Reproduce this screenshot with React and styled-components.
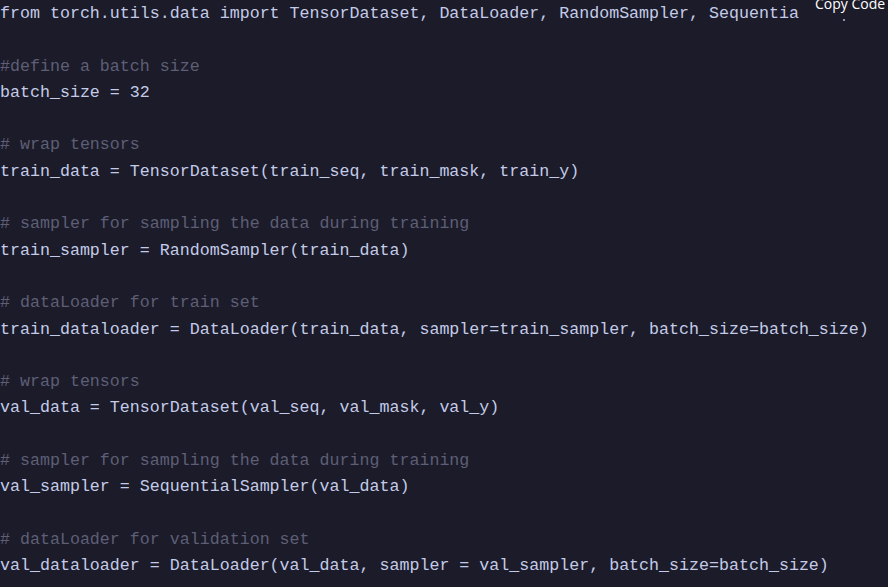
import { createGlobalStyle, styled } from 'styled-components';

const Global = createGlobalStyle`
  html, body {
    margin: 0;
    padding: 0;
    background: #1c1b29;
    overflow: hidden;
  }
`;

const Block = styled.div`
  position: relative;
  width: 888px;
  height: 587px;
  background: #1c1b29;
  overflow: hidden;
`;

const Code = styled.pre`
  margin: 0;
  padding: 1px 0 0;
  font-family: 'Liberation Mono', 'DejaVu Sans Mono', monospace;
  font-size: 16.65px;
  line-height: 26.3px;
  color: #c3cbe8;
  white-space: pre;
`;

const Comment = styled.span`
  color: #5c5f76;
`;

const CopyButton = styled.button`
  position: absolute;
  top: -6px;
  left: 815px;
  padding: 0;
  border: none;
  background: transparent;
  color: #ffffff;
  font-family: 'Open Sans', 'Liberation Sans', sans-serif;
  font-size: 14px;
  white-space: nowrap;
  cursor: pointer;
`;

const Dot = styled.span`
  position: absolute;
  top: 19px;
  left: 843px;
  width: 2px;
  height: 2px;
  background: #8a8fa8;
`;

const lines = [
  { text: 'from torch.utils.data import TensorDataset, DataLoader, RandomSampler, Sequentia' },
  { text: '' },
  { text: '#define a batch size', comment: true },
  { text: 'batch_size = 32' },
  { text: '' },
  { text: '# wrap tensors', comment: true },
  { text: 'train_data = TensorDataset(train_seq, train_mask, train_y)' },
  { text: '' },
  { text: '# sampler for sampling the data during training', comment: true },
  { text: 'train_sampler = RandomSampler(train_data)' },
  { text: '' },
  { text: '# dataLoader for train set', comment: true },
  { text: 'train_dataloader = DataLoader(train_data, sampler=train_sampler, batch_size=batch_size)' },
  { text: '' },
  { text: '# wrap tensors', comment: true },
  { text: 'val_data = TensorDataset(val_seq, val_mask, val_y)' },
  { text: '' },
  { text: '# sampler for sampling the data during training', comment: true },
  { text: 'val_sampler = SequentialSampler(val_data)' },
  { text: '' },
  { text: '# dataLoader for validation set', comment: true },
  { text: 'val_dataloader = DataLoader(val_data, sampler = val_sampler, batch_size=batch_size)' },
];

const App = () => {
  return (
    <>
      <Global />
      <Block>
        <Code>
          {lines.map((line, i) => (
            <div key={i}>
              {line.comment ? <Comment>{line.text}</Comment> : line.text || ' '}
            </div>
          ))}
        </Code>
        <CopyButton>Copy Code</CopyButton>
        <Dot />
      </Block>
    </>
  );
};

export default App;
